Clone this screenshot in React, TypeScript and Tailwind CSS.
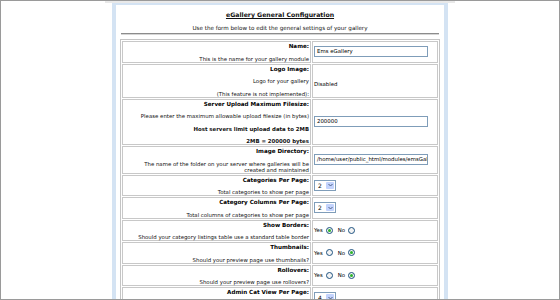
import type { ReactNode } from "react";

type Row = {
  label: string;
  desc: ReactNode[];
  control: ReactNode;
};

const TextBox = ({ value }: { value: string }) => (
  <div className="w-[114px] h-[11px] border border-[#7f9db9] bg-white px-[2px] overflow-hidden whitespace-nowrap leading-[9px] text-[5.4px] text-black">
    {value}
  </div>
);

const Select = ({ value }: { value: string }) => (
  <div className="flex w-[22px] h-[11px] border border-[#7f9db9] bg-white">
    <span className="flex-1 pl-[3px] leading-[9px] text-[6px] text-black">{value}</span>
    <span className="flex items-center justify-center w-[8px] m-[1px] bg-[#c3d3fd] rounded-[1px]">
      <svg width="5" height="4" viewBox="0 0 5 4">
        <path d="M0.5 1 L2.5 3 L4.5 1" fill="none" stroke="#4d6185" strokeWidth="1" />
      </svg>
    </span>
  </div>
);

const Radio = ({ checked }: { checked?: boolean }) => (
  <span className="inline-flex items-center justify-center w-[7px] h-[7px] rounded-full border border-[#1c5180] bg-[#f3f3f3]">
    {checked && <span className="w-[3px] h-[3px] rounded-full bg-[#2bb32b]" />}
  </span>
);

const YesNo = ({ yes }: { yes: boolean }) => (
  <div className="flex items-center gap-[3px] text-[5.4px] text-black">
    <span>Yes</span>
    <Radio checked={yes} />
    <span className="ml-[2px]">No</span>
    <Radio checked={!yes} />
  </div>
);

const rows: Row[] = [
  {
    label: "Name:",
    desc: ["This is the name for your gallery module"],
    control: <TextBox value="Ems eGallery" />,
  },
  {
    label: "Logo Image:",
    desc: ["Logo for your gallery", "(This feature is not implemented):"],
    control: <span className="text-[5.4px] text-black">Disabled</span>,
  },
  {
    label: "Server Upload Maximum Filesize:",
    desc: [
      "Please enter the maximum allowable upload filesize (in bytes)",
      <b>Host servers limit upload data to 2MB</b>,
      <b>2MB = 200000 bytes</b>,
    ],
    control: <TextBox value="200000" />,
  },
  {
    label: "Image Directory:",
    desc: [
      <>
        The name of the folder on your server where galleries will be
        <br />
        created and maintained
      </>,
    ],
    control: <TextBox value="/home/user/public_html/modules/emsGallery/galleries/" />,
  },
  {
    label: "Categories Per Page:",
    desc: ["Total categories to show per page"],
    control: <Select value="2" />,
  },
  {
    label: "Category Columns Per Page:",
    desc: ["Total columns of categories to show per page"],
    control: <Select value="2" />,
  },
  {
    label: "Show Borders:",
    desc: ["Should your category listings table use a standard table border"],
    control: <YesNo yes />,
  },
  {
    label: "Thumbnails:",
    desc: ["Should your preview page use thumbnails?"],
    control: <YesNo yes={false} />,
  },
  {
    label: "Rollovers:",
    desc: ["Should your preview page use rollovers?"],
    control: <YesNo yes={false} />,
  },
  {
    label: "Admin Cat View Per Page:",
    desc: ["Total categories to show per page in the admin area"],
    control: <Select value="4" />,
  },
];

export default function App() {
  return (
    <div className="w-[560px] h-[300px] border border-[#9a9a9a] bg-white overflow-hidden font-['DejaVu_Sans',Verdana,sans-serif] text-[#111]">
      <div className="ml-[104px] w-[350px] border-t-2 border-[#e9e9e9] px-[7px]">
        <div className="w-[336px] border-x-4 border-t-2 border-[#d4e3f3] px-[4px] pb-4 bg-white">
          <div className="pt-[6px] text-center text-[6.2px] leading-[8px] font-bold underline">
            eGallery General Configuration
          </div>
          <div className="mt-[5px] text-center text-[5.6px] leading-[8px]">
            Use the form below to edit the general settings of your gallery
          </div>
          <div className="mx-[1px] mt-[1px] border-t border-[#8c8c8c] border-b border-b-[#d6d6d6]" />
          <table className="mt-[4px] w-full border-separate border-spacing-[1px] border border-[#c4c4c4]">
            <tbody>
              {rows.map((r) => (
                <tr key={r.label}>
                  <td className="w-[189px] border border-[#c8c8c8] px-[1px] pt-[1px] pb-0 text-right align-top">
                    <div className="text-[5.6px] leading-[6px] font-bold text-black">{r.label}</div>
                    {r.desc.map((d, i) => (
                      <div key={i} className="mt-[6.5px] text-[5.4px] leading-[6px]">
                        {d}
                      </div>
                    ))}
                  </td>
                  <td className="border border-[#c8c8c8] pl-[1px] align-middle">{r.control}</td>
                </tr>
              ))}
            </tbody>
          </table>
        </div>
      </div>
    </div>
  );
}
